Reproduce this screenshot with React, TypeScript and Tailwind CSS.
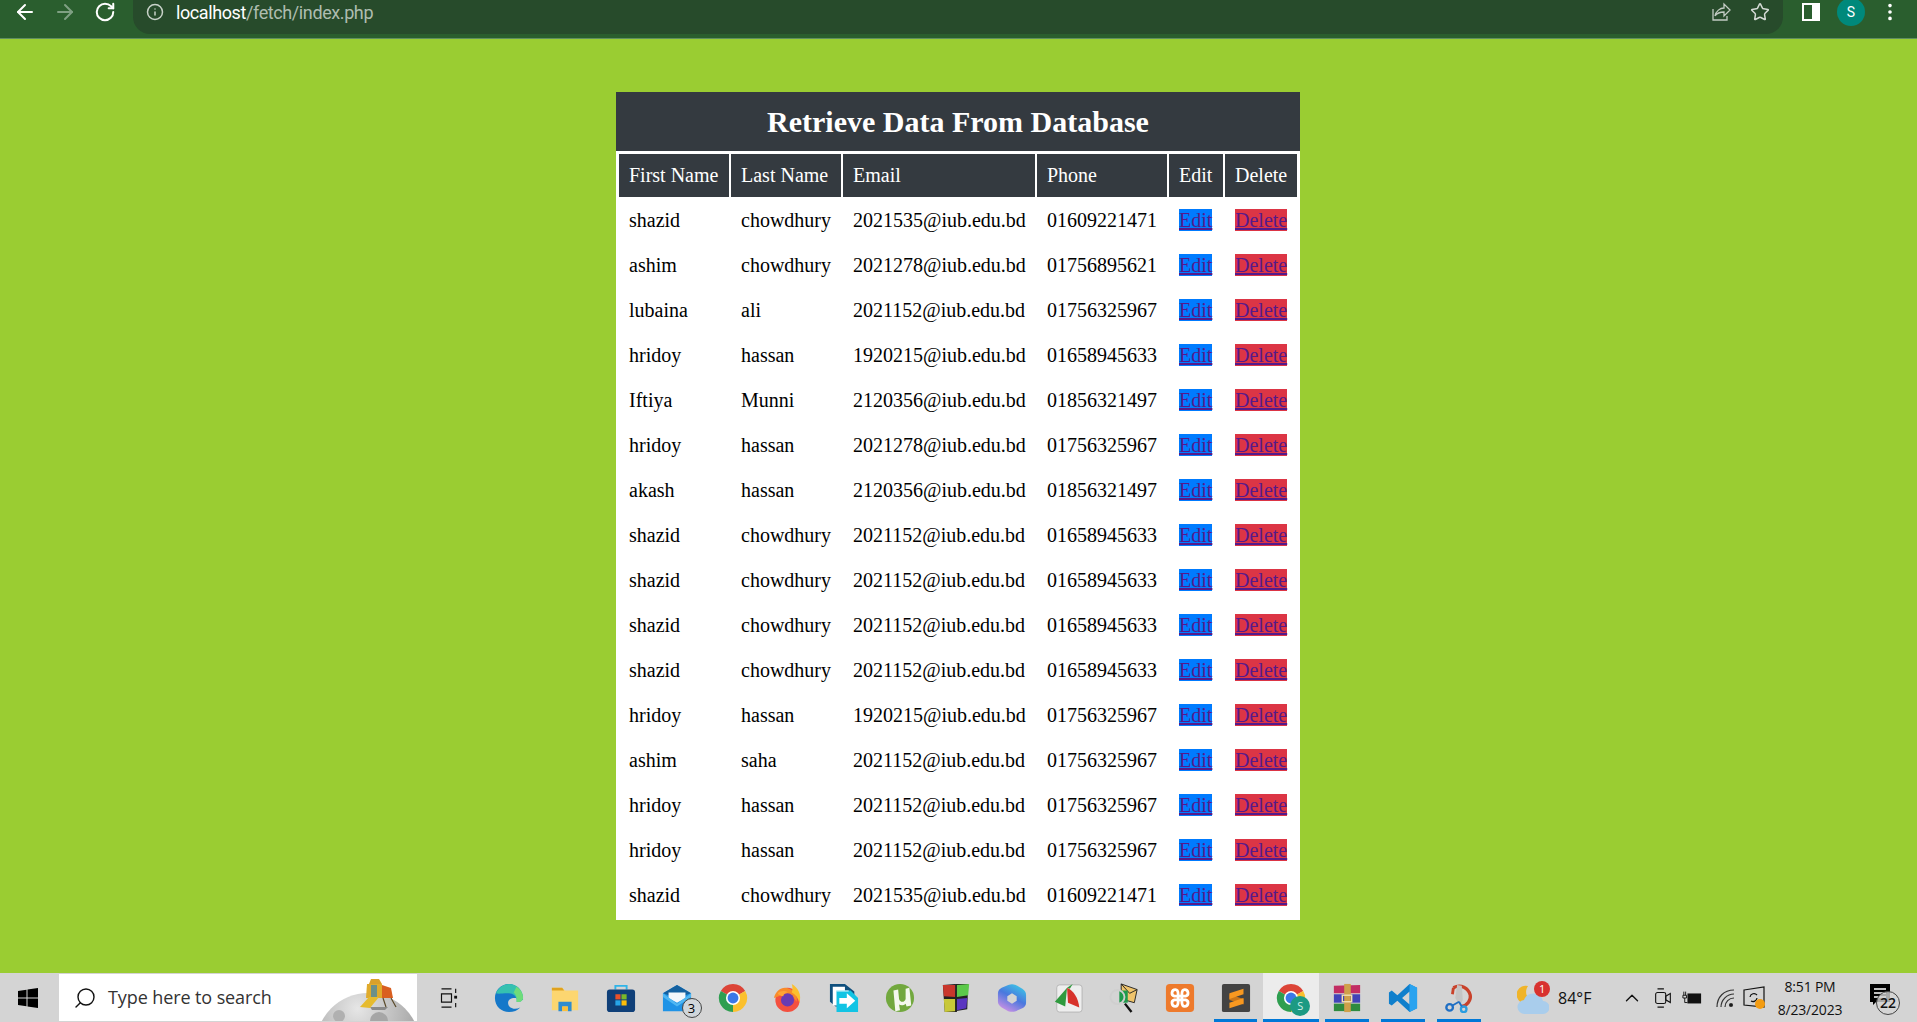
import React from 'react';
import { ArrowLeft, ArrowRight, RotateCw, Info, Star, Search, ChevronUp, MoreVertical } from 'lucide-react';

const rows = [
  ['shazid', 'chowdhury', '2021535@iub.edu.bd', '01609221471'],
  ['ashim', 'chowdhury', '2021278@iub.edu.bd', '01756895621'],
  ['lubaina', 'ali', '2021152@iub.edu.bd', '01756325967'],
  ['hridoy', 'hassan', '1920215@iub.edu.bd', '01658945633'],
  ['Iftiya', 'Munni', '2120356@iub.edu.bd', '01856321497'],
  ['hridoy', 'hassan', '2021278@iub.edu.bd', '01756325967'],
  ['akash', 'hassan', '2120356@iub.edu.bd', '01856321497'],
  ['shazid', 'chowdhury', '2021152@iub.edu.bd', '01658945633'],
  ['shazid', 'chowdhury', '2021152@iub.edu.bd', '01658945633'],
  ['shazid', 'chowdhury', '2021152@iub.edu.bd', '01658945633'],
  ['shazid', 'chowdhury', '2021152@iub.edu.bd', '01658945633'],
  ['hridoy', 'hassan', '1920215@iub.edu.bd', '01756325967'],
  ['ashim', 'saha', '2021152@iub.edu.bd', '01756325967'],
  ['hridoy', 'hassan', '2021152@iub.edu.bd', '01756325967'],
  ['hridoy', 'hassan', '2021152@iub.edu.bd', '01756325967'],
  ['shazid', 'chowdhury', '2021535@iub.edu.bd', '01609221471'],
];

const headers = ['First Name', 'Last Name', 'Email', 'Phone', 'Edit', 'Delete'];

const ChromeBar = () => (
  <header className="h-[39px] flex shrink-0 bg-[#2a5e2e] border-b border-[#5f8f5f] text-white">
    <div className="w-[133px] h-[34px] flex items-center pb-[10px] pl-[13px] gap-4">
      <ArrowLeft size={24} strokeWidth={2} />
      <ArrowRight size={24} strokeWidth={2} className="text-[#7fa083]" />
      <RotateCw size={22} strokeWidth={2.2} className="ml-[1px]" />
    </div>
    <div className="w-[1650px] h-[34px] bg-[#274b2b] rounded-b-[17px] flex items-center pb-[10px] pl-[13px] pr-[13px]">
      <Info size={18} className="text-[#c8d2c9]" />
      <span className="ml-[12px] text-[18px] tracking-[-0.4px] font-['Roboto',sans-serif]">
        localhost<span className="text-[#aebdb0]">/fetch/index.php</span>
      </span>
      <svg viewBox="0 0 20 20" className="w-[20px] h-[20px] ml-auto" fill="none" stroke="#c2cbc3" strokeWidth="1.3">
        <path d="M2 7v11h14v-4M4 14c1-5 5-8 9-8V2l6 6-6 6v-4c-4 0-7 1-9 4z" />
      </svg>
      <Star size={20} strokeWidth={1.8} className="text-[#d4dad5] ml-[19px]" />
    </div>
    <div className="flex-1 h-[34px] flex items-center pb-[10px]">
      <svg viewBox="0 0 18 18" className="w-[18px] h-[18px] ml-[19px]">
        <rect x="0" y="0" width="18" height="18" fill="#fff" />
        <rect x="2" y="2" width="8" height="14" fill="#2a5e2e" />
      </svg>
      <div className="w-[28px] h-[28px] ml-[17px] shrink-0 rounded-full bg-[#00897b] flex items-center justify-center text-[14px] font-['Roboto',sans-serif]">
        S
      </div>
      <MoreVertical size={22} className="ml-[14px] shrink-0" />
    </div>
  </header>
);

const DataTable = () => (
  <div className="ml-[616px] w-[684px] bg-white px-px pb-px font-['Liberation_Serif',serif] text-[20px] text-black">
    <h1 className="h-[59px] -mx-px bg-[#343a40] text-white text-center text-[30px] font-bold leading-[59px]">
      Retrieve Data From Database
    </h1>
    <table className="w-[682px] table-fixed border-separate border-spacing-[2px] mt-px">
      <colgroup>
        <col className="w-[110px]" />
        <col className="w-[110px]" />
        <col className="w-[192px]" />
        <col className="w-[130px]" />
        <col className="w-[54px]" />
        <col className="w-[72px]" />
      </colgroup>
      <thead>
        <tr>
          {headers.map((h) => (
            <th key={h} className="h-[43px] p-0 pl-[10px] pb-px bg-[#343a40] text-white text-left font-normal whitespace-nowrap">
              {h}
            </th>
          ))}
        </tr>
      </thead>
      <tbody>
        {rows.map((r, i) => (
          <tr key={i}>
            {r.map((c, j) => (
              <td key={j} className="h-[43px] p-0 pl-[10px] pb-px whitespace-nowrap">
                {c}
              </td>
            ))}
            <td className="h-[43px] p-0 pl-[10px] pb-px">
              <a href="#edit" className="bg-[#007bff] text-[#551a8b] underline">Edit</a>
            </td>
            <td className="h-[43px] p-0 pl-[10px] pb-px">
              <a href="#delete" className="bg-[#dc3545] text-[#551a8b] underline">Delete</a>
            </td>
          </tr>
        ))}
      </tbody>
    </table>
  </div>
);

// taskbar icons, all drawn on a 32 unit box
const icons: Record<string, React.ReactNode> = {
  edge: (
    <>
      <path d="M31 18C31 8 24 1 16 1 7 1 1 8 1 16c0 9 7 15 15 15 5 0 9-2 12-5-6 3-13 1-13-5 0-3 3-5 7-5 5 0 9 3 9 2z" fill="#1578c9" />
      <path d="M2 11C5 4 11 1 16 1c8 0 15 6 15 15 0 3-3 5-7 4 1-6-4-10-10-9-5 0-9 1-12 0z" fill="#35c1b0" />
      <path d="M24 4c5 3 7 8 7 12 0 3-3 5-7 4 1-5-1-8-3-10z" fill="#6fdc7a" />
    </>
  ),
  folder: (
    <>
      <path d="M2 5h11l3 3h14v21H2z" fill="#fcd670" />
      <path d="M2 5h11l2 3H2z" fill="#e0a21e" />
      <path d="M9 30V20h14v10h-4v-5h-6v5z" fill="#2f8ccf" />
      <rect x="13" y="25" width="6" height="5" fill="#fbbf3a" />
    </>
  ),
  store: (
    <>
      <path d="M10 7V3h12v4" fill="none" stroke="#2fb4e8" strokeWidth="2" />
      <rect x="1" y="7" width="30" height="24" rx="3" fill="#0f3f78" />
      <rect x="10" y="12" width="5.500" height="5.500" fill="#e8512a" />
      <rect x="16.500" y="12" width="5.500" height="5.500" fill="#7ab829" />
      <rect x="10" y="18.500" width="5.500" height="5.500" fill="#27a4e8" />
      <rect x="16.500" y="18.500" width="5.500" height="5.500" fill="#fbbc09" />
    </>
  ),
  mail: (
    <>
      <path d="M1 11L16 2l15 9v19H1z" fill="#1f93e6" />
      <path d="M1 11L16 2l15 9-15 5z" fill="#14609f" />
      <path d="M7 10h18v6l-9 5-9-5z" fill="#f2f7fb" />
      <path d="M1 11l15 11 15-11v4L16 25 1 15z" fill="#4fb7f2" />
    </>
  ),
  chrome: (
    <>
      <path d="M16 16L3 8.500A15 15 0 0 1 29 8.500z" fill="#dc4437" />
      <path d="M16 16L29 8.500A15 15 0 0 1 16 31z" fill="#fbc02d" />
      <path d="M16 16V31A15 15 0 0 1 3 8.500z" fill="#2f9e50" />
      <circle cx="16" cy="16" r="7.500" fill="#fff" />
      <circle cx="16" cy="16" r="5.800" fill="#3b78e7" />
    </>
  ),
  firefox: (
    <>
      <circle cx="15.500" cy="18" r="13" fill="#f4503f" />
      <path d="M1 16C3 7 11 3 17 6c6 2 10 8 8 14-3-6-8-9-14-8-3 1-7 3-10 4z" fill="#f98b2a" />
      <path d="M20 1c7 4 11 12 8 20-1-5-4-9-8-11 1-3 1-6 0-9z" fill="#fcc02e" />
      <circle cx="15.500" cy="18" r="7" fill="#6a3bb3" />
      <path d="M5 11c3-3 8-3 11-1-3 0-5 2-5 4-3 0-5-1-6-3z" fill="#ffa436" />
    </>
  ),
  arrow: (
    <>
      <path d="M1 1h16l10 8v16H7l-6-5z" fill="#0f4f7d" />
      <path d="M4 4h13v20H4z" fill="#fff" />
      <path d="M8 8h15l8 8v15H8z" fill="#12c4e4" />
      <path d="M8 8h13v1H8z" fill="#fff" />
      <path d="M11 16h8v-5l9 8-9 8v-5h-8z" fill="#fff" />
    </>
  ),
  utorrent: (
    <>
      <circle cx="16" cy="16" r="15" fill="#72a83e" />
      <path d="M9 8l5-1 1 10c1 4 6 4 7 0V6l4-1 2 19-5 1-1-3c-2 2-5 2-7 1l1 6-5 1z" fill="#f4f8ee" />
    </>
  ),
  blocks: (
    <>
      <path d="M2 2l13-1 2 30-13 0z" fill="#222" />
      <path d="M15 1h14l-1 27-13 2z" fill="#222" />
      <path d="M2 2h13v13l-12-1z" fill="#c9372c" />
      <path d="M17 2l13-1-1 12-12 2z" fill="#5cc94a" />
      <path d="M3 17h12v13l-11 1z" fill="#c8c838" />
      <path d="M17 17l11-1-1 11-10 2z" fill="#5a35c0" />
    </>
  ),
  m365: (
    <>
      <defs>
        <linearGradient id="m365" x1="0.900" y1="0.100" x2="0.400" y2="1">
          <stop offset="0" stopColor="#3cc4e6" />
          <stop offset="0.500" stopColor="#4a78de" />
          <stop offset="1" stopColor="#c08fe4" />
        </linearGradient>
      </defs>
      <path
        d="M12 2c3-1 5-1 8 0l7 4c3 2 4 4 4 7v8c0 3-2 5-4 6l-7 3c-3 1-5 1-8 0l-7-4c-3-2-4-4-4-6v-9c0-3 2-5 4-6zM16 11l-5 3v5l5 3 5-3v-5z"
        fill="url(#m365)"
        fillRule="evenodd"
      />
    </>
  ),
  foxit: (
    <>
      <rect x="4" y="2" width="27" height="29" rx="3" fill="#eeeeee" stroke="#b4b4b4" />
      <path d="M15 5L2 20l11 5z" fill="#2f9a3e" />
      <path d="M15 5c7 3 12 11 13 21l-12-5z" fill="#d7322b" />
      <path d="M15 5l6-4-3 5z" fill="#2f9a3e" />
    </>
  ),
  mailglass: (
    <>
      <path d="M13 1l17 6-3 14-14-4z" fill="#efc46c" stroke="#222" strokeWidth="1" />
      <path d="M13 1l9 10 8-4" fill="none" stroke="#222" strokeWidth="1" />
      <rect x="11" y="8" width="9" height="13" fill="#1f9a4c" />
      <circle cx="9" cy="15" r="7.500" fill="none" stroke="#cfcfcf" strokeWidth="2" />
      <path d="M17 22l7 9" stroke="#111" strokeWidth="2.500" />
    </>
  ),
  xampp: (
    <>
      <rect x="1" y="1" width="30" height="30" rx="4" fill="#ee7a2c" />
      <path d="M11 7c-4 0-5 6-1 7h12c4-1 3-7-1-7-3 0-3 3-3 5v8c0 2 0 5 3 5 4 0 5-6 1-7H10c-4 1-3 7 1 7 3 0 3-3 3-5v-8c0-2 0-5-3-5z" fill="none" stroke="#fff" strokeWidth="3" />
    </>
  ),
  sublime: (
    <>
      <rect x="1" y="1" width="30" height="30" rx="2" fill="#434343" />
      <path d="M9 12l15 5v6L9 18z" fill="#c9761a" />
      <path d="M24 6v6L9 17v-6z" fill="#f89820" />
      <path d="M24 16v6L9 27v-6z" fill="#f89820" />
    </>
  ),
  winrar: (
    <>
      <path d="M2 3l28-1v9H2z" fill="#c22d63" />
      <path d="M2 12h28v9H2z" fill="#4143b8" />
      <path d="M2 22h28v8H2z" fill="#2e8b3e" />
      <rect x="13" y="1" width="7" height="30" fill="#cfa04a" />
      <rect x="11" y="13" width="10" height="7" fill="none" stroke="#f3e1b0" strokeWidth="1.500" />
    </>
  ),
  vscode: (
    <>
      <path d="M23 1l8 4v22l-8 4-13-12-6 5-3-2v-12l3-2 6 5zM23 9l-8 7 8 7z" fill="#0f7fcc" />
      <path d="M23 1l8 4v22l-8 4z" fill="#2aa3ef" />
    </>
  ),
  snip: (
    <>
      <path d="M10 5c8-4 16 0 18 8 1 5-3 11-9 12" fill="none" stroke="#c9412a" strokeWidth="3.500" />
      <path d="M14 2l5 1 1 15-3 6-5-8z" fill="#c4c4c4" />
      <path d="M10 5l-1 7" stroke="#c9412a" strokeWidth="3" />
      <circle cx="6" cy="26" r="3.500" fill="none" stroke="#1f6fc4" strokeWidth="2.500" />
      <circle cx="21" cy="28" r="3" fill="none" stroke="#2b9de0" strokeWidth="2.500" />
      <path d="M9 24l7-4M19 25l-3-5" stroke="#1f6fc4" strokeWidth="2" />
    </>
  ),
};

const TaskIcon = ({ name, running, active, children }: { name: string; running?: boolean; active?: boolean; children?: React.ReactNode }) => (
  <div className={`relative w-[55.9px] h-full shrink-0 flex items-center justify-center ${active ? 'bg-[#ececec]' : ''}`}>
    <svg viewBox="0 0 32 32" className="w-[30px] h-[30px]">{icons[name]}</svg>
    {running && <span className={`absolute bottom-0 h-[3px] bg-[#0078d7] ${active ? 'inset-x-0' : 'inset-x-[6px]'}`} />}
    {children}
  </div>
);

const CountBadge = ({ n }: { n: string }) => (
  <span className="absolute right-[3px] bottom-[4px] w-[20px] h-[20px] rounded-full border border-[#444] bg-[#d0d6da] text-[13px] leading-[18px] text-center text-black">
    {n}
  </span>
);

const Taskbar = () => (
  <footer className="h-[49px] shrink-0 flex bg-[#d4d4d4] text-[#111] font-['Open_Sans',sans-serif]">
    <div className="w-[59px] shrink-0 flex items-center justify-center pr-[4px]">
      <svg viewBox="0 0 20 20" className="w-[20px] h-[20px]" fill="#000">
        <path d="M0 3l8.500-1.200v7.700H0zM9.500 1.600L20 0v9.500H9.500zM0 10.500h8.500v7.700L0 17zM9.500 10.500H20V20L9.500 18.400z" />
      </svg>
    </div>
    <div className="w-[358px] h-[47px] shrink-0 mt-px bg-white flex items-center pl-[14px] overflow-hidden">
      <Search size={24} strokeWidth={1.4} className="-scale-x-100" />
      <span className="ml-[11px] text-[18px] tracking-[-0.1px] text-[#333]">Type here to search</span>
      <svg viewBox="0 0 100 47" className="w-[100px] h-[47px] ml-auto">
        <defs>
          <radialGradient id="moon" cx="0.400" cy="0.150" r="0.800">
            <stop offset="0" stopColor="#e6e6e6" />
            <stop offset="1" stopColor="#8f8f8f" />
          </radialGradient>
        </defs>
        <circle cx="51" cy="71" r="52" fill="url(#moon)" />
        <circle cx="22" cy="42" r="6" fill="#b0b0b0" />
        <circle cx="62" cy="47" r="9" fill="#a6a6a6" />
        <path d="M53 33h18l-3 3H55z" fill="#8a8a8a" />
        <path d="M52 10l2-5h8l3 5z" fill="#d9a02a" />
        <path d="M50 10h15v14H49z" fill="#e0ab2c" />
        <rect x="54" y="11" width="6" height="12" fill="#6d9088" />
        <path d="M65 11l9 3 2 10H65z" fill="#d95f20" />
        <path d="M43 33l9-10h10l-9 11z" fill="#e6bb2e" />
        <path d="M74 24l5 9M66 24l3 9" stroke="#5a4a2a" strokeWidth="1.200" />
      </svg>
    </div>
    <div className="w-[64px] shrink-0 flex items-center justify-center">
      <svg viewBox="0 0 20 24" className="w-[20px] h-[20px]" fill="none" stroke="#111" strokeWidth="1.400">
        <path d="M1 1h12M1 23h12M1 7h12v10H1zM18 1v5M18 18v5" />
        <rect x="17" y="10" width="2" height="2" fill="#111" />
      </svg>
    </div>
    <TaskIcon name="edge" />
    <TaskIcon name="folder" />
    <TaskIcon name="store" />
    <TaskIcon name="mail">
      <CountBadge n="3" />
    </TaskIcon>
    <TaskIcon name="chrome" />
    <TaskIcon name="firefox" />
    <TaskIcon name="arrow" />
    <TaskIcon name="utorrent" />
    <TaskIcon name="blocks" />
    <TaskIcon name="m365" />
    <TaskIcon name="foxit" />
    <TaskIcon name="mailglass" />
    <TaskIcon name="xampp" />
    <TaskIcon name="sublime" running />
    <TaskIcon name="chrome" running active>
      <span className="absolute right-[9px] bottom-[6px] w-[20px] h-[20px] rounded-full bg-[#1d9a83] text-[#d0efe8] text-[11px] leading-[20px] text-center">S</span>
    </TaskIcon>
    <TaskIcon name="winrar" running />
    <TaskIcon name="vscode" running />
    <TaskIcon name="snip" running />
    <div className="flex items-center flex-1 min-w-0 pl-[30px]">
      <div className="relative w-[32px] h-[36px] shrink-0">
        <svg viewBox="0 0 32 36" className="w-[32px] h-[36px]">
          <path d="M11 6a9 9 0 1 0 4 15a10 10 0 0 1-4-15z" fill="#f0b429" />
          <path d="M8 34a7 7 0 0 1-1-14 10 10 0 0 1 19 1 6.500 6.500 0 0 1 0 13z" fill="#a9cdec" />
        </svg>
        <span className="absolute top-[1px] right-[-1px] w-[16px] h-[16px] rounded-full bg-[#d8322f] text-white text-[11px] leading-[16px] text-center">1</span>
      </div>
      <span className="ml-[9px] text-[16px] w-[45px] shrink-0 whitespace-nowrap">84°F</span>
      <ChevronUp size={22} strokeWidth={1.5} className="ml-[18px] shrink-0" />
      <svg viewBox="0 0 18 24" className="w-[18px] h-[22px] ml-[11px] shrink-0" fill="none" stroke="#111" strokeWidth="1.200">
        <rect x="1" y="6" width="11" height="12" rx="2" />
        <path d="M12 10l5-3v10l-5-3zM3 2h7M3 22h7" />
      </svg>
      <svg viewBox="0 0 22 16" className="w-[20px] h-[16px] ml-[10px] shrink-0" fill="#111">
        <rect x="6" y="3" width="15" height="11" />
        <path d="M2 1v4M4 1v4M1 5h4v3H1zM3 8v5h3" stroke="#111" fill="none" />
      </svg>
      <svg viewBox="0 0 20 20" className="w-[20px] h-[20px] ml-[13px] shrink-0" fill="none" stroke="#333" strokeWidth="1.200">
        <path d="M2 19C2 9 9 2 19 2M6 19c0-7 6-13 13-13M10 19c0-5 4-9 9-9" />
        <circle cx="16" cy="17" r="1.500" fill="#111" />
      </svg>
      <div className="relative w-[22px] h-[24px] ml-[8px] shrink-0">
        <svg viewBox="0 0 22 24" className="w-[22px] h-[24px]" fill="none" stroke="#111" strokeWidth="1.200">
          <path d="M1 4l20-3v20L1 19z" />
          <path d="M7 11a4 4 0 0 1 7-2M14 12a4 4 0 0 1-6 3" />
        </svg>
        <span className="absolute right-[0px] bottom-[1px] w-[10px] h-[10px] rounded-full bg-[#f39c12]" />
      </div>
      <div className="w-[74px] ml-[8px] shrink-0 flex flex-col items-center text-[14px] leading-[23px] tracking-[-0.2px] whitespace-nowrap">
        <span>8:51 PM</span>
        <span>8/23/2023</span>
      </div>
      <div className="relative w-[26px] h-[28px] ml-[23px] shrink-0">
        <svg viewBox="0 0 20 22" className="w-[20px] h-[22px]">
          <path d="M0 0h20v18H6l-3 3v-3H0z" fill="#000" />
          <path d="M4 5h12M4 9h12M4 13h12" stroke="#fff" strokeWidth="1.300" />
        </svg>
        <span className="absolute right-[-4px] bottom-[-3px] w-[24px] h-[24px] rounded-full border border-[#444] bg-[#d4d4d4]/80 text-[14px] leading-[22px] text-center font-semibold">22</span>
      </div>
    </div>
  </footer>
);

const App: React.FC = () => {
  return (
    <div className="h-screen w-full flex flex-col overflow-hidden bg-[#9acd32]">
      <ChromeBar />
      <main className="flex-1 pt-[53px]">
        <DataTable />
      </main>
      <Taskbar />
    </div>
  );
};

export default App;
